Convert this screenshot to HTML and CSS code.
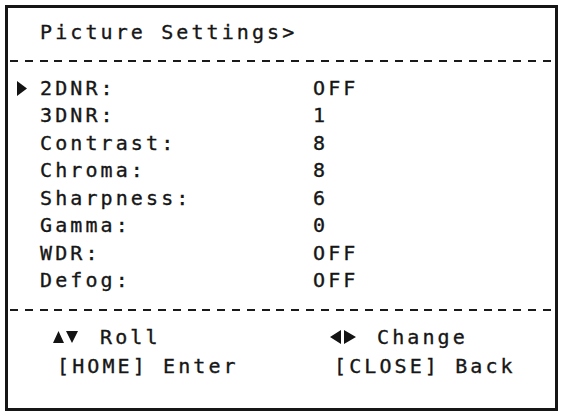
FILE: index.html
```html
<!DOCTYPE html>
<html lang="en">
<head>
<meta charset="utf-8">
<title>Picture Settings</title>
<link rel="stylesheet" href="styles.css">
</head>
<body>
<div class="frame">
  <div class="title">Picture Settings&gt;</div>
  <div class="rule"></div>
  <ul class="menu">
    <li class="row"><span class="mark"><svg width="10" height="15" viewBox="0 0 10 15"><path d="M0 0 L10 7.5 L0 15 Z" fill="#141414"/></svg></span><span class="label">2DNR:</span><span class="value">OFF</span></li>
    <li class="row"><span class="mark"></span><span class="label">3DNR:</span><span class="value">1</span></li>
    <li class="row"><span class="mark"></span><span class="label">Contrast:</span><span class="value">8</span></li>
    <li class="row"><span class="mark"></span><span class="label">Chroma:</span><span class="value">8</span></li>
    <li class="row"><span class="mark"></span><span class="label">Sharpness:</span><span class="value">6</span></li>
    <li class="row"><span class="mark"></span><span class="label">Gamma:</span><span class="value">0</span></li>
    <li class="row"><span class="mark"></span><span class="label">WDR:</span><span class="value">OFF</span></li>
    <li class="row"><span class="mark"></span><span class="label">Defog:</span><span class="value">OFF</span></li>
  </ul>
  <div class="rule rule-bottom"></div>
  <div class="help">
    <div class="hint"><span class="icon"><svg width="25" height="12" viewBox="0 0 25 12"><path d="M0 12 L5.5 0 L11 12 Z M13 0 L25 0 L19 12 Z" fill="#141414"/></svg></span><span>Roll</span></div>
    <div class="hint"><span class="icon"><svg width="28" height="14" viewBox="0 0 28 14"><path d="M0 7 L11 0 L11 14 Z M14 0 L14 14 L26 7 Z" fill="#141414"/></svg></span><span>Change</span></div>
    <div class="hint key">[HOME] Enter</div>
    <div class="hint key">[CLOSE] Back</div>
  </div>
</div>
</body>
</html>
```
FILE: styles.css
```css
html, body {
  margin: 0;
  padding: 0;
  background: #ffffff;
}

body {
  font-family: "DejaVu Sans Mono", "Liberation Mono", monospace;
  font-size: 20px;
  color: #161616;
  letter-spacing: 3.1px;
  -webkit-text-stroke: 0.35px #161616;
}

.frame {
  box-sizing: border-box;
  margin: 5px 0 0 5px;
  width: 553px;
  height: 406px;
  border: 3px solid #161616;
  display: flex;
  flex-direction: column;
}

.title {
  line-height: 27.5px;
  padding: 11px 0 0 32px;
}

.rule {
  height: 2px;
  margin: 13px 0 0 2px;
  background: repeating-linear-gradient(90deg, #1a1a1a 0 8px, transparent 8px 14.8px);
}

.rule-bottom {
  margin-top: 14px;
}

.menu {
  list-style: none;
  margin: 13px 0 0;
  padding: 0;
}

.row {
  display: grid;
  grid-template-columns: 32px 273px 1fr;
  line-height: 27.5px;
  height: 27.5px;
}

.mark {
  display: flex;
  align-items: center;
  padding-left: 9px;
}

.mark svg {
  display: block;
}

.help {
  display: grid;
  grid-template-columns: 277px 1fr;
  margin-top: 12px;
  padding-left: 45px;
}

.hint {
  display: flex;
  align-items: center;
  line-height: 29px;
  height: 29px;
}

.icon {
  display: flex;
  align-items: center;
  width: 47px;
}

.icon svg {
  display: block;
}

.key {
  padding-left: 4px;
}
```
